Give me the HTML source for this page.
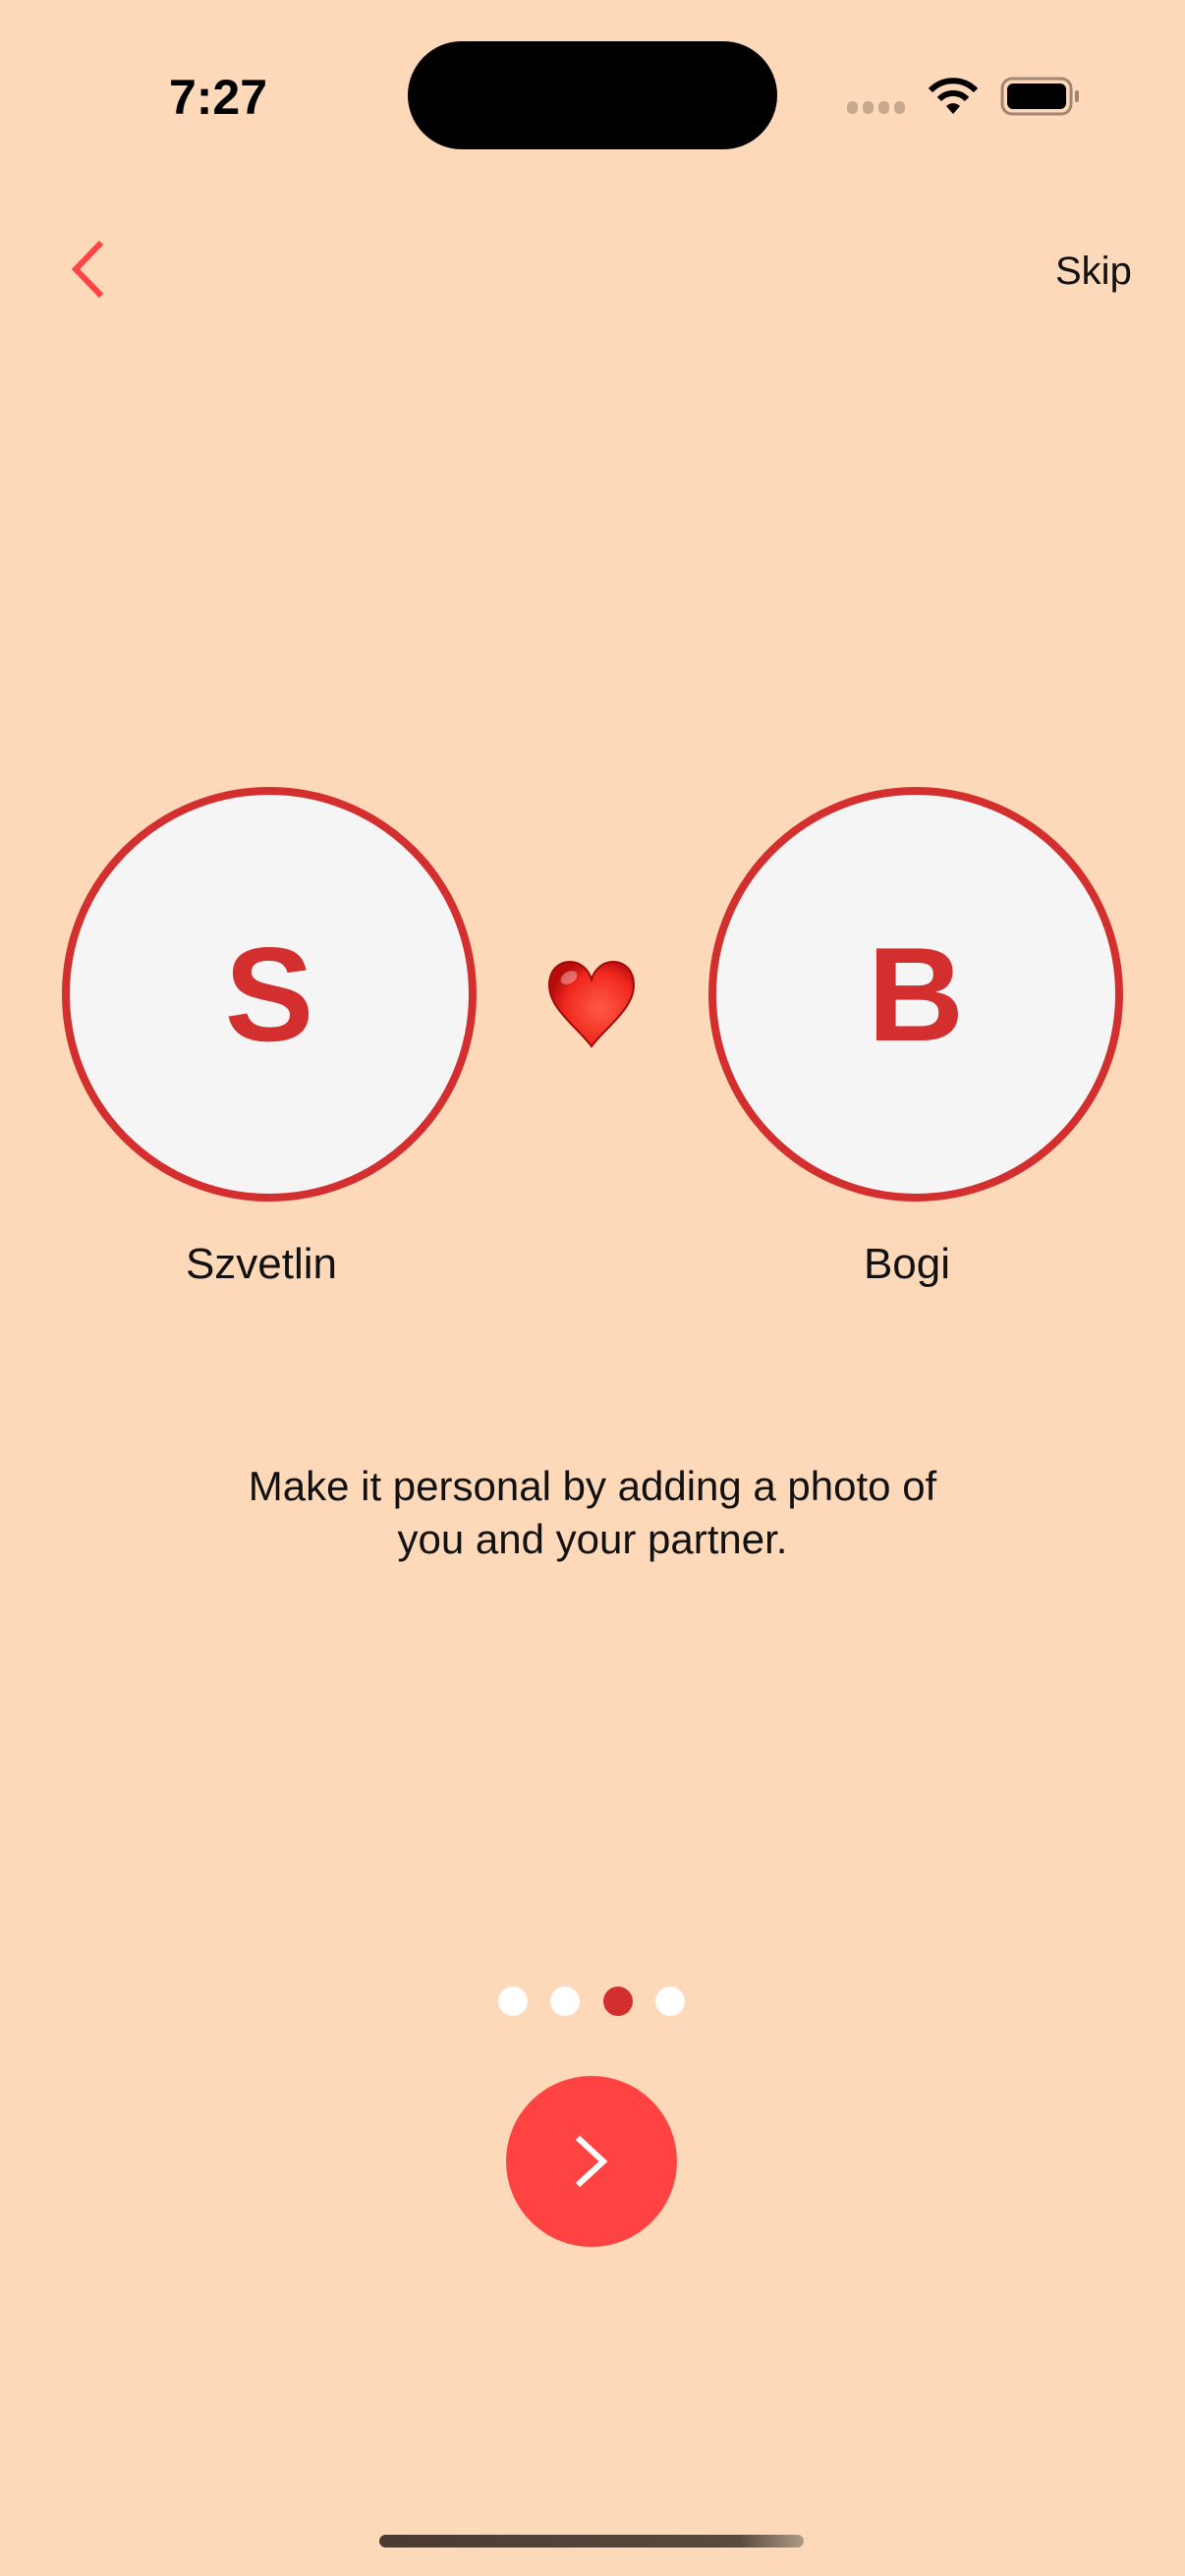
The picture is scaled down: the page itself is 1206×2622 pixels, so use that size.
<!DOCTYPE html>
<html><head><meta charset="utf-8"><style>
html,body{margin:0;padding:0}
body{width:1206px;height:2622px;background:#fed9b9;position:relative;overflow:hidden;font-family:"Liberation Sans",sans-serif;color:#111}
.abs{position:absolute}
.circle{position:absolute;width:406px;height:406px;border:8px solid #d32f2f;border-radius:50%;background:#f5f5f5;display:flex;align-items:center;justify-content:center;font-weight:bold;font-size:136px;color:#d32f2f}
.dot{position:absolute;top:2022px;width:30px;height:30px;border-radius:50%;background:#fff}
</style></head><body>
<div class="abs" style="left:160px;top:70px;font-size:50px;font-weight:bold;width:124px;text-align:center;color:#000">7:27</div>
<div class="abs" style="left:415px;top:42px;width:376px;height:110px;border-radius:55px;background:#000"></div>
<svg class="abs" style="left:862px;top:103px" width="62" height="14"><g fill="#c8a98e"><rect x="0" y="0" width="11" height="13" rx="5"/><rect x="16" y="0" width="11" height="13" rx="5"/><rect x="32" y="0" width="11" height="13" rx="5"/><rect x="48" y="0" width="11" height="13" rx="5"/></g></svg>
<svg class="abs" style="left:943px;top:78px" width="54" height="40" viewBox="0 0 54 40"><g fill="none" stroke="#000" stroke-width="6"><path d="M4 14 A32 32 0 0 1 50 14"/><path d="M13 23 A19 19 0 0 1 41 23"/></g><path d="M20 30 A10 10 0 0 1 34 30 L27 38 Z" fill="#000"/></svg>
<svg class="abs" style="left:1018px;top:78px" width="84" height="40" viewBox="0 0 84 40"><rect x="2" y="2" width="70" height="36" rx="10" fill="none" stroke="#a08672" stroke-width="3"/><rect x="7" y="7" width="60" height="26" rx="6" fill="#000"/><rect x="76" y="14" width="4" height="12" rx="2" fill="#a08672"/></svg>
<svg class="abs" style="left:68px;top:244px" width="42" height="60" viewBox="0 0 42 60"><path d="M35 3 L9 30 L35 57" fill="none" stroke="#ff4343" stroke-width="6"/></svg>
<div class="abs" style="left:1074px;top:254px;font-size:40px;color:#111">Skip</div>
<div class="circle" style="left:63px;top:801px">S</div>
<div class="circle" style="left:721px;top:801px">B</div>
<svg class="abs" style="left:555px;top:975px" width="94" height="94" viewBox="0 0 94 94">
<defs><radialGradient id="h" cx="0.6" cy="0.55" r="0.6"><stop offset="0" stop-color="#ff5a45"/><stop offset="0.7" stop-color="#f0281e"/><stop offset="1" stop-color="#b80c0c"/></radialGradient></defs>
<path d="M47 90 C34 72 4 52 4 28 C4 12 14 4 25 4 C36 4 44 12 47 22 C50 12 58 4 69 4 C80 4 90 12 90 28 C90 52 60 72 47 90 Z" fill="url(#h)" stroke="#a00a0a" stroke-width="2"/>
<ellipse cx="24" cy="20" rx="9" ry="6" fill="#fff" opacity="0.35" transform="rotate(-30 24 20)"/>
</svg>
<div class="abs" style="left:116px;top:1262px;width:300px;text-align:center;font-size:44px">Szvetlin</div>
<div class="abs" style="left:773px;top:1262px;width:300px;text-align:center;font-size:44px">Bogi</div>
<div class="abs" style="left:0;top:1486px;width:1206px;text-align:center;font-size:42px;line-height:54px">Make it personal by adding a photo of<br>you and your partner.</div>
<div class="dot" style="left:507px"></div>
<div class="dot" style="left:560px"></div>
<div class="dot" style="left:614px;background:#d32f2f"></div>
<div class="dot" style="left:667px"></div>
<div class="abs" style="left:515px;top:2113px;width:174px;height:174px;border-radius:50%;background:#ff4343"></div>
<svg class="abs" style="left:580px;top:2172px" width="44" height="56" viewBox="0 0 44 56"><path d="M8 4 L34 28 L8 52" fill="none" stroke="#fff" stroke-width="6"/></svg>
<div class="abs" style="left:386px;top:2580px;width:432px;height:13px;border-radius:7px;background:linear-gradient(90deg,#4a3a30,#5a4a3e 85%,#b09a85)"></div>
</body></html>
